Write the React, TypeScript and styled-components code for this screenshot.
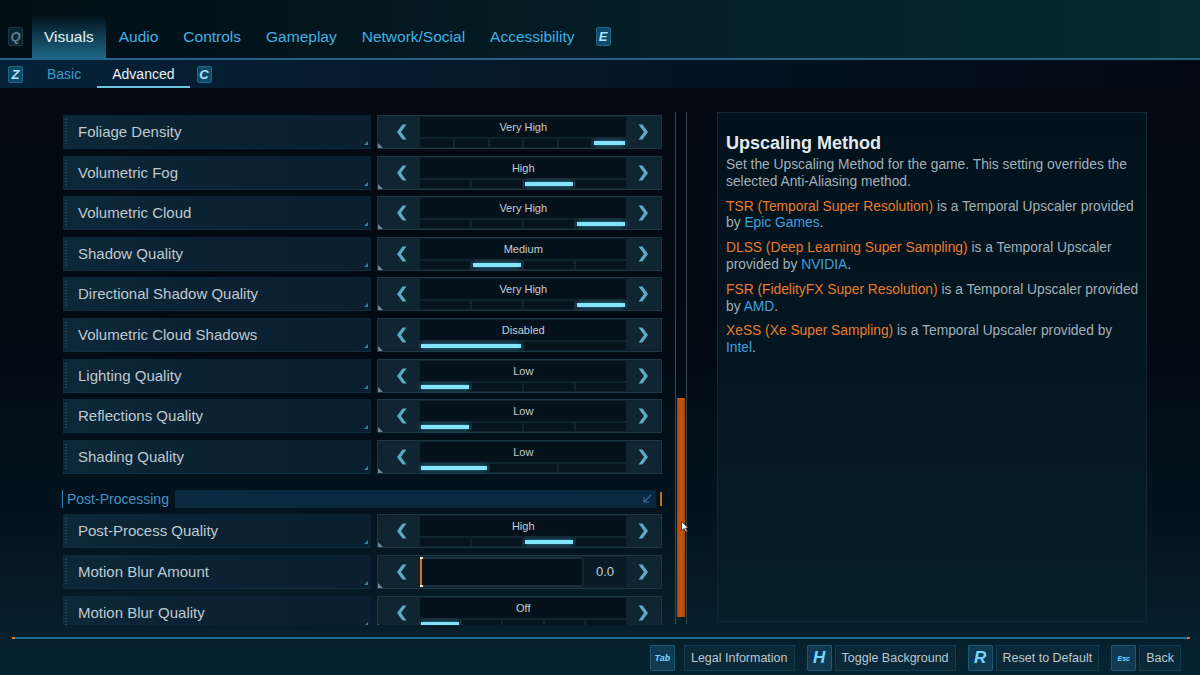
import React from "react";
import styled, { createGlobalStyle, css } from "styled-components";

const Global = createGlobalStyle`
  html, body { margin: 0; padding: 0; background: #020913; }
  * { box-sizing: border-box; }
`;

const Screen = styled.div`
  width: 1200px;
  height: 675px;
  display: flex;
  flex-direction: column;
  overflow: hidden;
  position: relative;
  font-family: "Liberation Sans", Arial, sans-serif;
  background: linear-gradient(180deg, #020913 0%, #020a14 50%, #03141e 78%, #062430 100%);
`;

const TopBar = styled.div`
  height: 60px;
  flex-shrink: 0;
  display: flex;
  align-items: flex-end;
  padding-left: 8px;
  border-bottom: 2px solid #22628a;
  background: linear-gradient(90deg, #020e16 0%, #031820 35%, #05242a 70%, #062a2e 100%);
`;

const TabsRow = styled.div`
  height: 43px;
  display: flex;
  align-items: center;
`;

const Tab = styled.div<{ $active?: boolean }>`
  height: 43px;
  display: flex;
  align-items: center;
  padding: 1px 12px 0;
  margin-right: 1px;
  font-size: 15.5px;
  color: #3fb2e4;
  ${(p) =>
    p.$active &&
    css`
      color: #e8f0f4;
      background: linear-gradient(180deg, rgba(20, 80, 110, 0) 0%, rgba(24, 86, 114, 0.6) 45%, #1e6584 100%);
    `}
`;

const KeyCap = styled.div<{ $dim?: boolean; $w?: number; $h?: number; $fs?: number }>`
  width: ${(p) => p.$w ?? 15}px;
  height: ${(p) => p.$h ?? 19}px;
  flex-shrink: 0;
  display: flex;
  align-items: center;
  justify-content: center;
  border-radius: 2px;
  font-style: italic;
  font-weight: bold;
  font-size: ${(p) => p.$fs ?? 13}px;
  ${(p) =>
    p.$dim
      ? css`
          background: #0b2530;
          border: 1px solid #173844;
          color: #5d7f8e;
        `
      : css`
          background: #124a66;
          border: 1px solid #1f6688;
          color: #a6e8ff;
        `}
`;

const TabKeyLeft = styled(KeyCap)`
  margin-right: 9px;
`;

const TabKeyRight = styled(KeyCap)`
  margin-left: 8px;
`;

const SubBar = styled.div`
  height: 28px;
  flex-shrink: 0;
  display: flex;
  align-items: center;
  padding-left: 8px;
  background: linear-gradient(90deg, #062238 0%, #05192c 40%, #041424 55%, rgba(2, 10, 20, 0) 100%);
`;

const SubTab = styled.div<{ $active?: boolean }>`
  height: 28px;
  display: flex;
  align-items: center;
  padding: 2px 15px 0;
  margin-right: 1px;
  font-size: 14px;
  color: #3a9ccc;
  border-bottom: 2px solid transparent;
  ${(p) =>
    p.$active &&
    css`
      color: #e8f0f4;
      border-bottom-color: #6cc6e4;
    `}
`;

const SubKeyLeft = styled(KeyCap)`
  margin-right: 9px;
`;
const SubKeyRight = styled(KeyCap)`
  margin-left: 6px;
`;

const Main = styled.div`
  flex: 1;
  display: flex;
  align-items: flex-start;
  padding: 24px 0 0 62px;
`;

const ListViewport = styled.div`
  width: 600px;
  height: 513px;
  overflow: hidden;
  padding-top: 3px;
  display: flex;
  flex-direction: column;
  gap: 6.6px;
`;

const Row = styled.div`
  flex-shrink: 0;
  height: 34px;
  display: flex;
  gap: 6px;
`;

const Label = styled.div`
  position: relative;
  width: 309px;
  height: 34px;
  margin-left: 1px;
  display: flex;
  align-items: center;
  padding-left: 15px;
  font-size: 15px;
  color: #bfcad0;
  background: linear-gradient(90deg, #0c2839 0%, #0a2233 50%, #0a2030 100%);
  border-bottom: 1px solid #0e2d3e;
  &::before {
    content: "";
    position: absolute;
    left: 2px;
    top: 4px;
    bottom: 4px;
    width: 2px;
    background: repeating-linear-gradient(180deg, rgba(90, 150, 180, 0.3) 0 1px, transparent 1px 3px);
  }
  &::after {
    content: "";
    position: absolute;
    right: 3px;
    bottom: 3px;
    width: 0;
    height: 0;
    border-left: 4px solid transparent;
    border-bottom: 4px solid #3a7fa2;
  }
`;

const Control = styled.div`
  position: relative;
  width: 285px;
  height: 34px;
  display: flex;
  gap: 2px;
  padding: 1px 3px 1px 7px;
  background: #10242f;
  border: 1px solid #1c3644;
  &::before {
    content: "";
    position: absolute;
    left: 0;
    bottom: 0;
    width: 0;
    height: 0;
    border-right: 5px solid transparent;
    border-top: 5px solid #6a8898;
    transform: rotate(-90deg);
  }
`;

const ArrowBtn = styled.div<{ $w: number }>`
  width: ${(p) => p.$w}px;
  flex-shrink: 0;
  display: flex;
  align-items: center;
  justify-content: center;
  background: #0f2531;
`;

const Display = styled.div`
  flex: 1;
  display: flex;
  flex-direction: column;
  gap: 2px;
`;

const ValueBox = styled.div`
  height: 20px;
  display: flex;
  align-items: center;
  justify-content: center;
  background: #06121b;
  font-size: 11px;
  color: #c3ced4;
`;

const SegTrack = styled.div`
  height: 8px;
  display: flex;
  gap: 2px;
`;

const Seg = styled.div<{ $on?: boolean }>`
  flex: 1;
  background: #07141d;
  display: flex;
  align-items: center;
  padding: 0 1px;
  &::after {
    content: "";
    flex: 1;
    height: 4px;
    ${(p) =>
      p.$on &&
      css`
        background: #84e4fb;
        box-shadow: 0 0 4px rgba(80, 200, 240, 0.8);
      `}
  }
`;

const SliderWrap = styled.div`
  flex: 1;
  display: flex;
  gap: 2px;
`;

const SliderTrack = styled.div`
  position: relative;
  flex: 1;
  background: #06121b;
  border-top: 2px solid #1d3240;
  border-bottom: 2px solid #1d3240;
`;

const SliderKnob = styled.div`
  position: absolute;
  left: 0;
  top: -2px;
  bottom: -2px;
  width: 2px;
  background: #d4731f;
  &::before,
  &::after {
    content: "";
    position: absolute;
    left: -0.5px;
    width: 3px;
    height: 2px;
    background: #e8e8e8;
  }
  &::before {
    top: 0;
  }
  &::after {
    bottom: 0;
  }
`;

const SliderValue = styled.div`
  width: 42px;
  display: flex;
  align-items: center;
  justify-content: center;
  background: #0a1b25;
  font-size: 13px;
  color: #c3ced4;
`;

const SectionHeader = styled.div`
  flex-shrink: 0;
  height: 18px;
  margin-top: 9.4px;
  display: flex;
  align-items: stretch;
  border-left: 1px solid #2f7fb0;
`;

const SectionTitle = styled.div`
  display: flex;
  align-items: center;
  padding: 0 6px 0 4px;
  font-size: 14px;
  color: #4a92c4;
`;

const SectionFill = styled.div`
  flex: 1;
  display: flex;
  align-items: center;
  justify-content: flex-end;
  padding-right: 4px;
  background: linear-gradient(90deg, #0a2a42 0%, #0a2740 100%);
`;

const SectionEnd = styled.div`
  width: 2px;
  margin-left: 4px;
  background: #c86a20;
  margin-top: 2px;
  margin-bottom: 2px;
`;

const Scrollbar = styled.div`
  position: relative;
  width: 12px;
  height: 512px;
  margin-left: 13px;
  border-left: 1px solid #3a4b56;
  border-right: 1px solid #3a4b56;
`;

const ScrollThumb = styled.div`
  position: absolute;
  left: 1px;
  right: 1px;
  top: 286px;
  height: 219px;
  background: linear-gradient(90deg, #a8480c, #c4570f 50%, #a8480c);
`;

const Cursor = styled.svg`
  position: absolute;
  left: 5px;
  top: 409px;
`;

const Panel = styled.div`
  width: 430px;
  height: 510px;
  margin-left: 30px;
  padding: 19px 4px 0 8px;
  background: linear-gradient(180deg, #03121c 0%, #041722 60%, #05202a 100%);
  border: 1px solid #0f2833;
`;

const PanelTitle = styled.div`
  font-size: 18px;
  font-weight: bold;
  color: #e2eaee;
  line-height: 22px;
  margin-bottom: 3px;
`;

const Para = styled.p`
  margin: 0 0 8px 0;
  font-size: 13.8px;
  line-height: 16.8px;
  color: #a0b0b9;
`;

const Orange = styled.span`
  color: #e87b2c;
`;
const Blue = styled.span`
  color: #3ea0dc;
`;

const Footer = styled.div`
  height: 38px;
  flex-shrink: 0;
  display: flex;
  flex-direction: column;
`;

const FooterLine = styled.div`
  position: relative;
  height: 2px;
  margin: 0 10px 0 12px;
  background: #1d6890;
  &::before,
  &::after {
    content: "";
    position: absolute;
    top: 0;
    width: 3px;
    height: 2px;
    background: #d07a30;
  }
  &::before {
    left: 0;
  }
  &::after {
    right: 0;
  }
`;

const ButtonRow = styled.div`
  display: flex;
  justify-content: flex-end;
  gap: 12px;
  padding: 6px 19px 0 0;
`;

const FooterBtn = styled.div<{ $gap?: number }>`
  display: flex;
  gap: ${(p) => p.$gap ?? 3}px;
  height: 26px;
`;

const FooterKey = styled(KeyCap)`
  height: 26px;
  border-radius: 1px;
  background: #0f3a52;
  border: 1px solid #1b5878;
  color: #72d8ff;
`;

const FooterLabel = styled.div`
  display: flex;
  align-items: center;
  padding: 0 6px;
  font-size: 12.5px;
  color: #b9c8d0;
  background: #0b2838;
  border: 1px solid #123a4e;
`;

const Chevron = ({ dir }: { dir: "left" | "right" }) => (
  <svg width="10" height="16" viewBox="0 0 10 16">
    <polygon
      points={dir === "left" ? "9.5,0.5 4,8 9.5,15.5 5.5,15.5 0,8 5.5,0.5" : "0.5,0.5 6,8 0.5,15.5 4.5,15.5 10,8 4.5,0.5"}
      fill="#5ea8c6"
    />
  </svg>
);

type Setting = { label: string; value: string; segs: number; active: number };

const videoSettings: Setting[] = [
  { label: "Foliage Density", value: "Very High", segs: 6, active: 5 },
  { label: "Volumetric Fog", value: "High", segs: 4, active: 2 },
  { label: "Volumetric Cloud", value: "Very High", segs: 4, active: 3 },
  { label: "Shadow Quality", value: "Medium", segs: 4, active: 1 },
  { label: "Directional Shadow Quality", value: "Very High", segs: 4, active: 3 },
  { label: "Volumetric Cloud Shadows", value: "Disabled", segs: 2, active: 0 },
  { label: "Lighting Quality", value: "Low", segs: 4, active: 0 },
  { label: "Reflections Quality", value: "Low", segs: 4, active: 0 },
  { label: "Shading Quality", value: "Low", segs: 3, active: 0 },
];

const SelectorRow = ({ s }: { s: Setting }) => (
  <Row>
    <Label>{s.label}</Label>
    <Control>
      <ArrowBtn $w={33}>
        <Chevron dir="left" />
      </ArrowBtn>
      <Display>
        <ValueBox>{s.value}</ValueBox>
        <SegTrack>
          {Array.from({ length: s.segs }).map((_, i) => (
            <Seg key={i} $on={i === s.active} />
          ))}
        </SegTrack>
      </Display>
      <ArrowBtn $w={30}>
        <Chevron dir="right" />
      </ArrowBtn>
    </Control>
  </Row>
);

export default function App() {
  return (
    <Screen>
      <Global />
      <TopBar>
        <TabsRow>
          <TabKeyLeft $dim>Q</TabKeyLeft>
          <Tab $active>Visuals</Tab>
          <Tab>Audio</Tab>
          <Tab>Controls</Tab>
          <Tab>Gameplay</Tab>
          <Tab>Network/Social</Tab>
          <Tab>Accessibility</Tab>
          <TabKeyRight>E</TabKeyRight>
        </TabsRow>
      </TopBar>
      <SubBar>
        <SubKeyLeft $h={17}>Z</SubKeyLeft>
        <SubTab>Basic</SubTab>
        <SubTab $active>Advanced</SubTab>
        <SubKeyRight $h={17}>C</SubKeyRight>
      </SubBar>
      <Main>
        <ListViewport>
          {videoSettings.map((s) => (
            <SelectorRow key={s.label} s={s} />
          ))}
          <SectionHeader>
            <SectionTitle>Post-Processing</SectionTitle>
            <SectionFill>
              <svg width="9" height="9" viewBox="0 0 9 9">
                <path d="M8 1 L1 8 M1 3 V8 H6" stroke="#2d6f96" strokeWidth="1.2" fill="none" />
              </svg>
            </SectionFill>
            <SectionEnd />
          </SectionHeader>
          <SelectorRow s={{ label: "Post-Process Quality", value: "High", segs: 4, active: 2 }} />
          <Row>
            <Label>Motion Blur Amount</Label>
            <Control>
              <ArrowBtn $w={33}>
                <Chevron dir="left" />
              </ArrowBtn>
              <SliderWrap>
                <SliderTrack>
                  <SliderKnob />
                </SliderTrack>
                <SliderValue>0.0</SliderValue>
              </SliderWrap>
              <ArrowBtn $w={30}>
                <Chevron dir="right" />
              </ArrowBtn>
            </Control>
          </Row>
          <SelectorRow s={{ label: "Motion Blur Quality", value: "Off", segs: 5, active: 0 }} />
        </ListViewport>
        <Scrollbar>
          <ScrollThumb />
          <Cursor width="8" height="12" viewBox="0 0 8 12">
            <path d="M0.5 0.5 L0.5 10 L3 7.5 L5 11 L6.5 10.3 L4.6 7 L7.5 7 Z" fill="#f2f2f2" stroke="#222" strokeWidth="0.8" />
          </Cursor>
        </Scrollbar>
        <Panel>
          <PanelTitle>Upscaling Method</PanelTitle>
          <Para>Set the Upscaling Method for the game. This setting overrides the selected Anti-Aliasing method.</Para>
          <Para>
            <Orange>TSR (Temporal Super Resolution)</Orange> is a Temporal Upscaler provided by <Blue>Epic Games</Blue>.
          </Para>
          <Para>
            <Orange>DLSS (Deep Learning Super Sampling)</Orange> is a Temporal Upscaler provided by <Blue>NVIDIA</Blue>.
          </Para>
          <Para>
            <Orange>FSR (FidelityFX Super Resolution)</Orange> is a Temporal Upscaler provided by <Blue>AMD</Blue>.
          </Para>
          <Para>
            <Orange>XeSS (Xe Super Sampling)</Orange> is a Temporal Upscaler provided by <Blue>Intel</Blue>.
          </Para>
        </Panel>
      </Main>
      <Footer>
        <FooterLine />
        <ButtonRow>
          <FooterBtn $gap={9}>
            <FooterKey $w={25} $fs={9}>Tab</FooterKey>
            <FooterLabel>Legal Information</FooterLabel>
          </FooterBtn>
          <FooterBtn>
            <FooterKey $w={25} $fs={17}>H</FooterKey>
            <FooterLabel>Toggle Background</FooterLabel>
          </FooterBtn>
          <FooterBtn>
            <FooterKey $w={25} $fs={17}>R</FooterKey>
            <FooterLabel>Reset to Default</FooterLabel>
          </FooterBtn>
          <FooterBtn>
            <FooterKey $w={25} $fs={7}>Esc</FooterKey>
            <FooterLabel>Back</FooterLabel>
          </FooterBtn>
        </ButtonRow>
      </Footer>
    </Screen>
  );
}
